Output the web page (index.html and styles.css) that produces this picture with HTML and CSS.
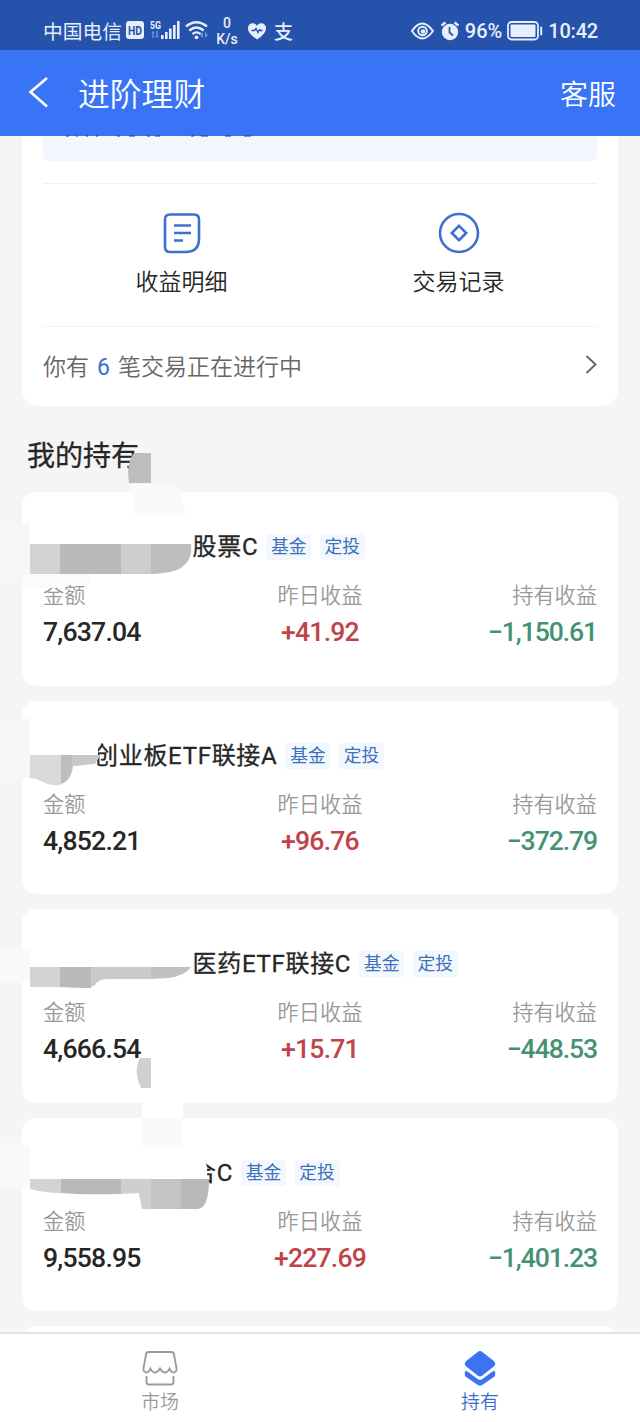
FILE: index.html
```html
<!DOCTYPE html>
<html lang="zh-CN">
<head>
<meta charset="utf-8">
<title>进阶理财</title>
<link rel="stylesheet" href="styles.css">
</head>
<body>
<div class="app">
  <div class="status">
    <span class="carrier">中国电信</span>
    <svg class="status-icons" width="84" height="32" viewBox="0 0 84 32">
      <rect x="0" y="6" width="18" height="18" rx="3" fill="#e6effb"/>
      <text x="9" y="19.500" class="hd" text-anchor="middle" textLength="14" lengthAdjust="spacingAndGlyphs">HD</text>
      <text x="24" y="13.500" class="five" textLength="11" lengthAdjust="spacingAndGlyphs">5G</text>
      <g fill="#6c96dc"><path d="M25 18l2-2 2 2h-1.300v5h-1.400v-5zM29 21h1.300v-5h1.400v5H33l-2 2z"/><path d="M74 20l3-3v6zM82 20l-3-3v6z"/></g>
      <g fill="#e6effb"><rect x="35" y="20" width="2.600" height="4"/><rect x="39" y="17" width="2.600" height="7"/><rect x="43" y="13.500" width="2.600" height="10.500"/><rect x="47" y="10" width="2.600" height="14"/><rect x="51" y="6" width="2.600" height="18"/></g>
      <g fill="none" stroke="#e6effb" stroke-width="2.300"><path d="M60 11.500q10.500-8.500 21 0M63.300 15.500q7.200-6 14.400 0M66.500 19q4-3.200 8 0"/></g>
      <circle cx="70.500" cy="22.300" r="1.900" fill="#e6effb"/>
    </svg>
    <span class="speed"><span>0</span><span>K/s</span></span>
    <svg class="heart" width="20" height="18" viewBox="0 0 20 18"><path d="M10 17.500C5 14 1 10.500 1 6.200 1 1 7.500-.5 10 3.800 12.500-.5 19 1 19 6.200 19 10.500 15 14 10 17.500z" fill="#e6effb"/><path d="M4.500 8.500h3l1.500-2 2 4 1.500-3 1 1h2" fill="none" stroke="#2552aa" stroke-width="1.300"/></svg>
    <span class="pay">支</span>
    <div class="status-right">
      <svg width="50" height="22" viewBox="0 0 50 22">
        <path d="M1 11Q11-4 22 11 11 26 1 11z" fill="none" stroke="#e6effb" stroke-width="2"/>
        <circle cx="11.500" cy="11" r="4.300" fill="none" stroke="#e6effb" stroke-width="2"/><circle cx="12" cy="11.500" r="2.300" fill="#e6effb"/>
        <circle cx="39" cy="12" r="8.200" fill="#e6effb"/><path d="M30.500 5.500l4-3M47.500 5.500l-4-3" stroke="#e6effb" stroke-width="2.200"/>
        <path d="M38.500 7v5.500l3.500 3" fill="none" stroke="#2552aa" stroke-width="1.700"/>
      </svg>
      <span class="pct">96%</span>
      <svg width="36" height="20" viewBox="0 0 36 20"><rect x="1" y="1" width="30" height="17.500" rx="3.500" fill="none" stroke="#e6effb" stroke-width="1.800"/><rect x="3.500" y="3.500" width="25" height="12.500" rx="1" fill="#e6effb"/><rect x="33.200" y="5.500" width="2" height="9" rx="1" fill="#e6effb"/></svg>
      <span class="time">10:42</span>
    </div>
  </div>

  <header class="header">
    <svg width="22" height="34" viewBox="0 0 22 34"><path d="M20 2L3.500 16 20 30.500" fill="none" stroke="#fff" stroke-width="2.600"/></svg>
    <h1>进阶理财</h1>
    <span class="service">客服</span>
  </header>

  <main class="content">
    <section class="summary">
      <div class="notice"></div>
      <div class="actions">
        <div class="action">
          <svg width="44" height="44" viewBox="0 0 44 44" fill="none" stroke="#3f6fd0" stroke-width="2.600"><path d="M10 3.500h24q5 0 5 5v19Q39 41 25.500 41H10q-5 0-5-5V8.500q0-5 5-5z"/><path d="M14 14.500h17M14 22h17M14 29.500h9"/></svg>
          <span>收益明细</span>
        </div>
        <div class="action">
          <svg width="44" height="44" viewBox="0 0 44 44" fill="none" stroke="#3f6fd0" stroke-width="2.600"><circle cx="22" cy="22" r="19"/><path d="M22 14.800l7.200 7.200-7.200 7.200-7.200-7.200z"/></svg>
          <span>交易记录</span>
        </div>
      </div>
      <div class="pending">
        <span>你有<b>6</b>笔交易正在进行中</span>
        <svg width="12" height="20" viewBox="0 0 12 20"><path d="M1.500 1L10.500 9.500l-9 8.500" fill="none" stroke="#666" stroke-width="1.900"/></svg>
      </div>
    </section>

    <h2 class="section-title">我的持有</h2>

    <section class="holdings">
      <article class="fund">
        <div class="fund-head inset-a"><h3>股票C</h3><i class="tag">基金</i><i class="tag">定投</i></div>
        <dl><div><dt>金额</dt><dd>7,637.04</dd></div><div><dt>昨日收益</dt><dd class="up">+41.92</dd></div><div><dt>持有收益</dt><dd class="down">−1,150.61</dd></div></dl>
      </article>
      <article class="fund">
        <div class="fund-head inset-b"><h3>创业板ETF联接A</h3><i class="tag">基金</i><i class="tag">定投</i></div>
        <dl><div><dt>金额</dt><dd>4,852.21</dd></div><div><dt>昨日收益</dt><dd class="up">+96.76</dd></div><div><dt>持有收益</dt><dd class="down">−372.79</dd></div></dl>
      </article>
      <article class="fund">
        <div class="fund-head inset-a"><h3>医药ETF联接C</h3><i class="tag">基金</i><i class="tag">定投</i></div>
        <dl><div><dt>金额</dt><dd>4,666.54</dd></div><div><dt>昨日收益</dt><dd class="up">+15.71</dd></div><div><dt>持有收益</dt><dd class="down">−448.53</dd></div></dl>
      </article>
      <article class="fund">
        <div class="fund-head inset-c"><h3>合C</h3><i class="tag">基金</i><i class="tag">定投</i></div>
        <dl><div><dt>金额</dt><dd>9,558.95</dd></div><div><dt>昨日收益</dt><dd class="up">+227.69</dd></div><div><dt>持有收益</dt><dd class="down">−1,401.23</dd></div></dl>
      </article>
      <article class="fund"></article>
    </section>
  </main>

  <nav class="tabs">
    <div class="tab">
      <svg width="38" height="36" viewBox="0 0 38 36" fill="none" stroke="#999" stroke-width="1.800"><path d="M7.500 2h23q2 0 2.400 2l2.600 14q.4 4.500-3 4.500-2.500 0-4-4-1.800 4-4.500 4t-5-4q-2.300 4-5 4t-4.500-4q-1.500 4-4 4-3.400 0-3-4.500L5.100 4q.4-2 2.400-2z"/><path d="M5.500 26v6q0 2.500 2.500 2.500h22q2.500 0 2.500-2.500v-6"/></svg>
      <span>市场</span>
    </div>
    <div class="tab active">
      <svg width="38" height="36" viewBox="0 0 38 36" fill="#3a74f3"><path d="M17 1.700q2-1.400 4 0l11.500 9q3.500 2.800 0 6L21 25.800q-2 1.500-4 0l-11.500-9q-3.500-3.200 0-6z"/><path d="M3.800 21.500l2-.5L17 29.300q2 1.400 4 0L32.200 21l2 .5v3.500q0 1-1 1.800l-12 8.200q-2.200 1.200-4.400 0l-12-8.200q-1-.8-1-1.800z"/></svg>
      <span>持有</span>
    </div>
  </nav>

  <svg class="mask" width="640" height="1422" viewBox="0 0 640 1422">
    <g fill="#223a66"><path d="M66 135.500h3v1h-3zM76 135.500h2v1h-2zM86 135.500h2v1h-2zM96 135.500h2v1h-2zM117 135.500h3v1h-3zM129 135.500h6v1h-6zM147 135.500h3v1h-3zM155 135.500h5v1h-5zM191 135.500h3v1h-3zM201 135.500h7v1h-7zM225 135.500h6v1h-6zM244 135.500h7v1h-7z"/></g>
    <path d="M134 453h17v30h-22q-3-20 5-30z" fill="#bdbdbd"/>
    <path d="M131 484h44q8 13 11 31h-51z" fill="#fafafa"/>
    <path d="M0 524h30v50H22v5H0z" fill="#f7f7f7"/>
    <path d="M30 515h158q4 12 3 29H30z" fill="#fff"/>
    <path d="M30 544h30v30H30z" fill="#d3d3d3"/><path d="M60 544h61v30H60z" fill="#bababa"/><path d="M121 544h30v30h-30z" fill="#cecece"/><path d="M151 544h40q2 15-9 23-7 6-31 7z" fill="#bdbdbd"/>
    <path d="M22 574h68v11H56v3H22z" fill="#fbfbfb"/>
    <path d="M0 719h30v59H0z" fill="#f7f7f7"/>
    <path d="M30 725h60q9 10 8 30H30z" fill="#fff"/>
    <path d="M30 755h31v30q-13 1-20-4-5-3-11-3z" fill="#d9d9d9"/><path d="M61 755h39q0 9-27 11-2 15-12 18z" fill="#bdbdbd"/><path d="M72 755h28l-5 9-23 2z" fill="#c8c8c8"/>
    <path d="M0 950h30v32H0z" fill="#f9f9f9"/>
    <path d="M30 967h30v20H30z" fill="#d3d3d3"/><path d="M60 967h31v21q-12 0-31-1z" fill="#b9b9b9"/><path d="M91 967h60v12H107q-9 0-12 6l-4 2z" fill="#cacaca"/><path d="M151 967h40q-6 9-23 11l-17 1z" fill="#c1c1c1"/>
    <path d="M140 1058h11v30h-10q-8-18-1-30z" fill="#d0d0d0"/>
    <path d="M142 1101h41v17h-41z" fill="#fff"/><path d="M142 1118h41v29h-41z" fill="#fafafa"/>
    <path d="M0 1143h22l8 4v40H0z" fill="#f9f9f9"/>
    <path d="M30 1147h170q8 10 7 32H30z" fill="#fff"/>
    <path d="M30 1179h31v14q-16 0-31-4z" fill="#d3d3d3"/><path d="M61 1179h60v15q-40 1-60-1z" fill="#b9b9b9"/><path d="M121 1179h30v30h-9l-3-16-18 1z" fill="#cfcfcf"/><path d="M151 1179h30v30h-30z" fill="#c5c5c5"/><path d="M181 1179h28q0 30-12 30h-16z" fill="#b9b9b9"/>
  </svg>
</div>
</body>
</html>
```
FILE: styles.css
```css
* { box-sizing: border-box; margin: 0; padding: 0; }
body { background: #f5f5f5; font-family: Roboto, "Noto Sans CJK SC", sans-serif; color: #262626; }
.app { position: relative; width: 640px; height: 1422px; display: flex; flex-direction: column; overflow: hidden; }

.status { height: 50px; flex: none; background: #2552aa; color: #e6effb; display: flex; align-items: center; padding: 12px 42px 0 43px; }
.carrier { font-size: 19.800px; line-height: 30px; padding-top: 3px; width: 83px; white-space: nowrap; }
.status-icons { flex: none; }
.hd { font: bold 12px Roboto, sans-serif; fill: #2552aa; }
.five { font: bold 10px Roboto, sans-serif; fill: #e6effb; }
.speed { display: flex; flex-direction: column; align-items: center; width: 24px; margin-left: 5px; font-size: 14px; line-height: 16px; font-weight: 500; }
.heart { margin-left: 8px; flex: none; }
.pay { margin-left: 7px; padding-top: 3px; font-size: 19px; line-height: 30px; font-weight: 500; }
.status-right { margin-left: auto; display: flex; align-items: center; font-size: 20px; font-weight: 500; }
.pct { margin: 0 5px 0 4px; }
.time { margin-left: 5px; letter-spacing: -.2px; }

.header { height: 86px; flex: none; background: #3a74f6; color: #fff; display: flex; align-items: center; padding: 0 24px 0 27px; }
.header h1 { font-size: 31.800px; font-weight: 350; line-height: 46px; padding-top: 3px; margin-left: 29px; }
.service { margin-left: auto; font-size: 28px; line-height: 40px; padding-top: 5px; font-weight: 350; }

.content { flex: 1; min-height: 0; overflow: hidden; padding: 0 22px; }
.summary { height: 270px; background: #fff; border-radius: 0 0 16px 16px; padding: 0 21px; }
.notice { height: 25px; background: #f2f6fd; border-radius: 0 0 6px 6px; }
.actions { margin-top: 22px; height: 144px; border-top: 1px solid #f0f0f0; border-bottom: 1px solid #f3f3f3; display: grid; grid-template-columns: 1fr 1fr; padding-top: 27px; }
.action { display: flex; flex-direction: column; align-items: center; font-size: 23px; line-height: 34px; font-weight: 350; gap: 11px; }
.pending { display: flex; justify-content: space-between; align-items: center; height: 76px; font-size: 23px; font-weight: 350; color: #666; }
.pending b { font-weight: 400; color: #3c70cb; margin: 0 8px; }

.section-title { font-size: 28px; line-height: 40px; font-weight: 400; -webkit-text-stroke: .3px #262626; margin: 31px 0 15px 5px; }
.holdings { display: flex; flex-direction: column; gap: 15px; }
.fund { height: 193.600px; flex: none; background: #fff; border-radius: 14px; padding: 37px 21px 0; }
.fund-head { display: flex; align-items: center; height: 36px; }
.fund-head h3 { font-size: 24px; font-weight: 400; -webkit-text-stroke: .3px #262626; line-height: 36px; margin-right: 8px; letter-spacing: .7px; white-space: nowrap; }
.inset-a { padding-left: 149.500px; }
.inset-b { padding-left: 51px; }
.inset-c { padding-left: 149px; }
.tag { font-style: normal; width: 45px; height: 26px; line-height: 26px; text-align: center; font-size: 17.800px; color: #3c70b8; background: #f3f8fe; border-radius: 3px; margin-right: 8.500px; }
.fund dl { display: grid; grid-template-columns: 1fr 1fr 1fr; margin-top: 14px; }
.fund dl div:nth-child(2) { text-align: center; }
.fund dl div:nth-child(3) { text-align: right; }
dt { font-size: 21.200px; line-height: 34px; font-weight: 350; color: #999; }
dd { font-size: 26.600px; line-height: 38px; font-weight: 500; letter-spacing: -.8px; }
.up { color: #c04348; }
.down { color: #459273; letter-spacing: -1.100px; }

.tabs { height: 90px; flex: none; background: #fff; border-top: 2px solid #e3e3e3; display: grid; grid-template-columns: 1fr 1fr; }
.tab { display: flex; flex-direction: column; align-items: center; gap: 2px; padding-top: 16px; font-size: 19px; line-height: 30px; font-weight: 350; color: #999; }
.active { color: #3c70c8; }
.mask { position: absolute; left: 0; top: 0; }
```
